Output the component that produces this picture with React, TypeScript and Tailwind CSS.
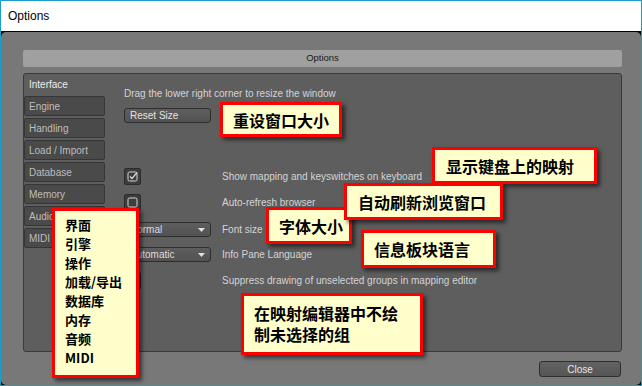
import React from "react";

const ui = "font-['Liberation_Sans',Arial,sans-serif]";
const cjk = "font-['Noto_Sans_CJK_SC','Noto_Sans',sans-serif]";

const tabs = ["Engine", "Handling", "Load / Import", "Database", "Memory", "Audio", "MIDI"];

function CheckBox({ checked }: { checked?: boolean }) {
  return (
    <div className="w-[17px] h-[17px] rounded-[2px] bg-[#3d3d3d] border border-[#2c2c2c] flex items-center justify-center">
      <svg width="11" height="11" viewBox="0 0 11 11">
        <rect x="1" y="1" width="9" height="9" rx="1.5" fill="none" stroke="#d8d8d8" strokeWidth="1" />
        {checked && <path d="M3 5.5 L5 7.5 L10 1.5" fill="none" stroke="#d8d8d8" strokeWidth="1.2" />}
      </svg>
    </div>
  );
}

function Dropdown({ value }: { value: string }) {
  return (
    <div className="w-[87px] h-[15px] rounded-[3px] bg-gradient-to-b from-[#5e5e5e] to-[#525252] border border-[#2e2e2e] flex items-center justify-between pl-[5px] pr-[5px]">
      <span className="text-[10px] text-[#dcdcdc]">{value}</span>
      <svg width="7" height="4" viewBox="0 0 7 4">
        <path d="M0 0 H7 L3.5 4 Z" fill="#e0e0e0" />
      </svg>
    </div>
  );
}

function Note({ className, children }: { className: string; children: React.ReactNode }) {
  return (
    <div
      className={`absolute bg-[#ffffcc] border-[3px] border-[#ff0000] shadow-[3px_3px_4px_rgba(0,0,0,0.55)] text-black font-bold ${cjk} ${className}`}
    >
      {children}
    </div>
  );
}

export default function App() {
  return (
    <div className={`relative w-[642px] h-[386px] border border-[#1a9fc8] bg-black flex flex-col overflow-hidden ${ui}`}>
      {/* window title bar */}
      <div className="h-[30px] bg-white flex items-center pl-[7px] text-[12px] text-black">Options</div>

      {/* dialog body */}
      <div className="flex-1 mt-px rounded-[5px] bg-[#787878] pt-[18px] pl-[22px] pr-[19px] flex flex-col">
        <div className="h-[17px] rounded-[2px] bg-[#a0a0a0] flex items-center justify-center text-[9.5px] text-[#1c1c1c]">
          Options
        </div>

        <div className="mt-[6px] h-[279px] rounded-[3px] bg-[#5e5e5e] border border-[#3a3a3a] flex">
          {/* tab column */}
          <div className="w-[83px] flex flex-col">
            <div className="h-[20px] flex items-center pl-[5px] text-[10px] text-[#ececec]">Interface</div>
            {tabs.map((t) => (
              <div
                key={t}
                className="mt-[2px] w-[81px] h-[20px] rounded-[2px] bg-[#4a4a4a] border border-[#363636] flex items-center pl-[4px] text-[10px] text-[#bdbdbd]"
              >
                {t}
              </div>
            ))}
          </div>

          {/* interface page */}
          <div className="flex-1 flex flex-col pl-[17px] pt-[14px] text-[10px] text-[#d4d4d4]">
            <div className="h-[12px] leading-[12px]">Drag the lower right corner to resize the window</div>
            <div className="mt-[8px] w-[87px] h-[15px] rounded-[3px] bg-gradient-to-b from-[#5e5e5e] to-[#525252] border border-[#2e2e2e] flex items-center pl-[5px] text-[#e2e2e2]">
              Reset Size
            </div>

            <div className="mt-[45px] h-[17px] flex items-center">
              <div className="w-[98px]"><CheckBox checked /></div>
              <span>Show mapping and keyswitches on keyboard</span>
            </div>
            <div className="mt-[9px] h-[17px] flex items-center">
              <div className="w-[98px]"><CheckBox /></div>
              <span>Auto-refresh browser</span>
            </div>
            <div className="mt-[11px] h-[15px] flex items-center">
              <div className="w-[98px]"><Dropdown value="Normal" /></div>
              <span>Font size</span>
            </div>
            <div className="mt-[10px] h-[15px] flex items-center">
              <div className="w-[98px]"><Dropdown value="Automatic" /></div>
              <span>Info Pane Language</span>
            </div>
            <div className="mt-[10px] h-[17px] flex items-center">
              <div className="w-[98px]"><CheckBox /></div>
              <span>Suppress drawing of unselected groups in mapping editor</span>
            </div>
          </div>
        </div>

        <div className="mt-[9px] flex justify-end pr-px">
          <div className="w-[82px] h-[16px] rounded-[3px] bg-gradient-to-b from-[#636363] to-[#555555] border border-[#2e2e2e] flex items-center justify-center text-[10px] text-[#e6e6e6]">
            Close
          </div>
        </div>
      </div>

      {/* annotations */}
      <Note className="left-[219px] top-[101px] w-[122px] h-[35px] flex items-center pl-[10px] text-[16px]">重设窗口大小</Note>
      <Note className="left-[431px] top-[146px] w-[165px] h-[37px] flex items-center pl-[11px] text-[16px]">显示键盘上的映射</Note>
      <Note className="left-[265px] top-[206px] w-[86px] h-[37px] flex items-center pl-[10px] text-[16px]">字体大小</Note>
      <Note className="left-[343px] top-[182px] w-[159px] h-[37px] flex items-center pl-[11px] text-[16px]">自动刷新浏览窗口</Note>
      <Note className="left-[360px] top-[229px] w-[135px] h-[38px] flex items-center pl-[10px] text-[16px]">信息板块语言</Note>
      <Note className="left-[240px] top-[292px] w-[182px] h-[62px] pl-[10px] pt-[7px] text-[16px] leading-[21px]">
        在映射编辑器中不绘
        <br />
        制未选择的组
      </Note>
      <Note className="left-[51px] top-[207px] w-[87px] h-[170px] pl-[10px] pt-[4px] text-[13px] leading-[19px]">
        <div>界面</div>
        <div>引擎</div>
        <div>操作</div>
        <div>加载/导出</div>
        <div>数据库</div>
        <div>内存</div>
        <div>音频</div>
        <div>MIDI</div>
      </Note>
    </div>
  );
}
